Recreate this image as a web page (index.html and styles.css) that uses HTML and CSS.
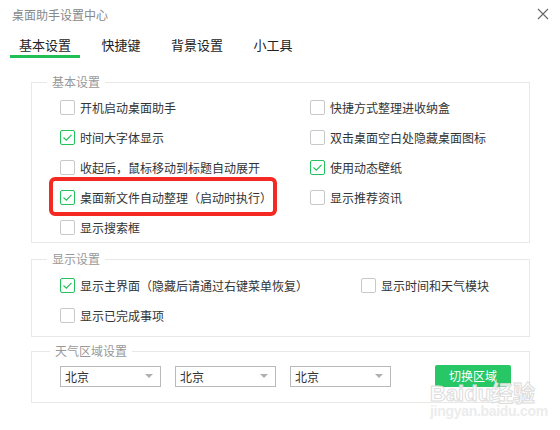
FILE: index.html
```html
<!DOCTYPE html>
<html lang="zh-CN">

<head>
    <meta charset="UTF-8">
    <meta name="viewport" content="width=device-width, initial-scale=1.0">
    <title>桌面助手设置中心</title>
    <link rel="stylesheet" href="styles.css">
</head>

<body>
    <div class="window">
        <!-- 标题栏 -->
        <div class="titlebar">
            <span class="title">桌面助手设置中心</span>
            <svg class="close" width="12" height="12" viewBox="0 0 12 12">
                <path d="M1 1 L11 11 M11 1 L1 11" stroke="#666" stroke-width="1.1" fill="none" />
            </svg>
        </div>

        <!-- 分页 -->
        <div class="tabs">
            <div class="tab active">基本设置</div>
            <div class="tab">快捷键</div>
            <div class="tab">背景设置</div>
            <div class="tab">小工具</div>
        </div>

        <fieldset class="group group-basic">
            <legend>基本设置</legend>
            <div class="opts cols-basic">
                <label class="opt"><span class="box"></span>开机启动桌面助手</label>
                <label class="opt"><span class="box"></span>快捷方式整理进收纳盒</label>
                <label class="opt"><span class="box checked"></span>时间大字体显示</label>
                <label class="opt"><span class="box"></span>双击桌面空白处隐藏桌面图标</label>
                <label class="opt"><span class="box"></span>收起后，鼠标移动到标题自动展开</label>
                <label class="opt"><span class="box checked"></span>使用动态壁纸</label>
                <label class="opt mark"><span class="box checked"></span>桌面新文件自动整理（启动时执行）<span class="red-box"></span></label>
                <label class="opt"><span class="box"></span>显示推荐资讯</label>
                <label class="opt"><span class="box"></span>显示搜索框</label>
            </div>
        </fieldset>

        <fieldset class="group group-show">
            <legend>显示设置</legend>
            <div class="opts cols-show">
                <label class="opt"><span class="box checked"></span>显示主界面（隐藏后请通过右键菜单恢复）</label>
                <label class="opt"><span class="box"></span>显示时间和天气模块</label>
                <label class="opt"><span class="box"></span>显示已完成事项</label>
            </div>
        </fieldset>

        <fieldset class="group group-weather">
            <legend>天气区域设置</legend>
            <div class="area-row">
                <div class="select"><span>北京</span><i class="arrow"></i></div>
                <div class="select"><span>北京</span><i class="arrow"></i></div>
                <div class="select"><span>北京</span><i class="arrow"></i></div>
                <div class="btn">切换区域</div>
            </div>
        </fieldset>
    </div>

    <!-- 水印 -->
    <div class="watermark">
        <div class="wm-logo">Baidu经验</div>
        <div class="wm-url">jingyan.baidu.com</div>
    </div>
</body>

</html>
```

FILE: styles.css
```css
* {
    margin: 0;
    padding: 0;
    box-sizing: border-box;
}

body {
    width: 560px;
    height: 430px;
    background: #fff;
    font-family: "Noto Sans CJK SC", "Liberation Sans", sans-serif;
    font-size: 12px;
    color: #333;
    position: relative;
    overflow: hidden;
}

.titlebar {
    height: 30px;
    display: flex;
    align-items: center;
    justify-content: space-between;
    padding: 0 12px 2px 12px;
}

.title {
    color: #888;
    font-size: 12px;
}

.close {
    margin-right: -1px;
}

.tabs {
    display: flex;
    padding-left: 10px;
}

.tab {
    width: 70px;
    margin-right: 6px;
    padding-top: 4px;
    line-height: 21px;
    font-size: 13px;
    color: #222;
    text-align: center;
    border-bottom: 3px solid transparent;
}

.tab.active {
    border-bottom-color: #1fbf55;
}

/* 分组框 */
.group {
    width: 499px;
    margin-left: 31px;
    border: 1px solid #e8e8e6;
    padding: 0 0 0 28px;
}

.group legend {
    margin-left: -13px;
    padding: 0 5px;
    line-height: 16px;
    font-size: 12px;
    color: #999;
}

.group-basic {
    margin-top: 16px;
    padding-top: 2px;
}

.group-show {
    margin-top: 8px;
    padding-top: 3px;
    padding-bottom: 6px;
}

.group-weather {
    margin-top: 6px;
    padding-top: 6px;
    padding-bottom: 15px;
}

.group-weather legend {
    margin-left: -10px;
}

.opts {
    display: grid;
    grid-auto-rows: 30px;
}

.cols-basic {
    grid-template-columns: 250px auto;
}

.cols-show {
    grid-template-columns: 301px auto;
}

.opt {
    display: flex;
    align-items: center;
    white-space: nowrap;
}

.box {
    width: 15px;
    height: 15px;
    margin-right: 5px;
    border: 1px solid #c9c9c9;
    border-radius: 2px;
    background: #fff;
    flex-shrink: 0;
}

.box.checked {
    border-color: #22c35c;
    background: url("data:image/svg+xml,%3Csvg xmlns='http://www.w3.org/2000/svg' width='13' height='13'%3E%3Cpath d='M2.5 6.5 L5.3 9.2 L10.5 3.8' stroke='%2322c35c' stroke-width='1.2' fill='none'/%3E%3C/svg%3E") no-repeat center;
}

/* 红色标注框 */
.mark {
    position: relative;
}

.red-box {
    position: absolute;
    left: -11px;
    top: -5px;
    width: 228px;
    height: 39px;
    border: 4px solid #f42a22;
    border-radius: 6px;
}

/* 区域选择 */
.area-row {
    display: flex;
    align-items: center;
    height: 22px;
}

.select {
    width: 101px;
    height: 21px;
    margin-right: 14px;
    border: 1px solid #b9b9b9;
    display: flex;
    align-items: center;
    justify-content: space-between;
    padding: 0 7px 0 4px;
    color: #333;
}

.arrow {
    width: 0;
    height: 0;
    border-left: 4px solid transparent;
    border-right: 4px solid transparent;
    border-top: 4px solid #b0b0b0;
}

.btn {
    width: 76px;
    height: 22px;
    margin-left: 30px;
    background: #27c766;
    color: #fff;
    border-radius: 2px;
    line-height: 22px;
    text-align: center;
}

.watermark {
    position: absolute;
    left: 430px;
    top: 384px;
    pointer-events: none;
}

.wm-logo {
    font-family: "Liberation Sans", "Noto Sans CJK SC", sans-serif;
    font-size: 22px;
    font-weight: bold;
    line-height: 19px;
    color: rgba(255, 255, 255, 0.85);
    -webkit-text-stroke: 1px #dcdcdc;
}

.wm-url {
    font-family: "Liberation Sans", sans-serif;
    font-size: 14px;
    font-weight: bold;
    line-height: 16px;
    color: #ececec;
    letter-spacing: -0.3px;
}
```
